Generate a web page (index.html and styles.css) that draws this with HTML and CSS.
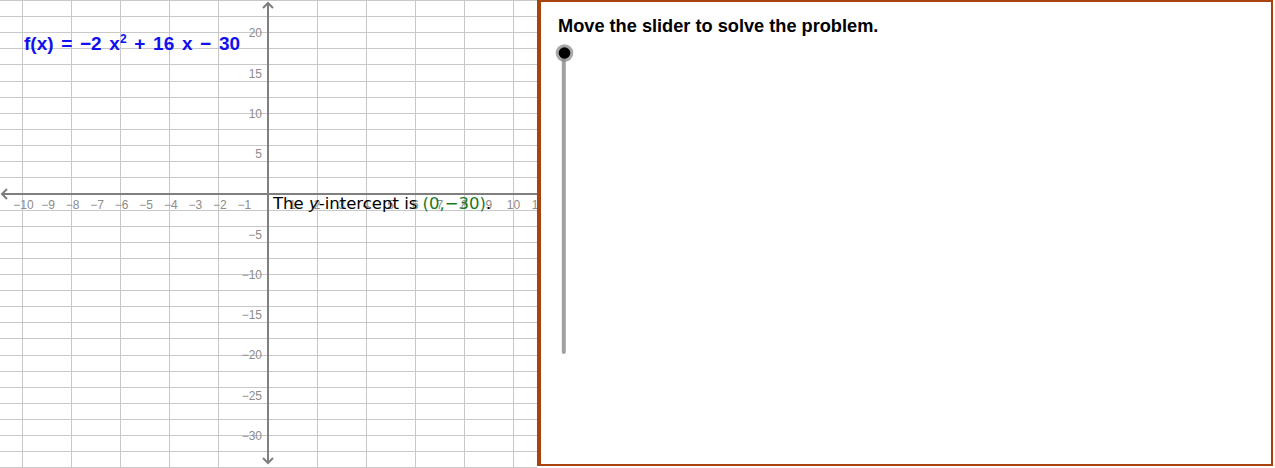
FILE: index.html
```html
<!DOCTYPE html>
<html>
<head>
<meta charset="utf-8">
<link rel="stylesheet" href="styles.css">
</head>
<body>
<div class="app">
  <div class="graphics">
    <svg class="grid" width="537" height="468" viewBox="0 0 537 468">
      <g class="gridlines">
        <line x1="22.5" y1="0" x2="22.5" y2="468"/>
        <line x1="71.5" y1="0" x2="71.5" y2="468"/>
        <line x1="120.5" y1="0" x2="120.5" y2="468"/>
        <line x1="169.5" y1="0" x2="169.5" y2="468"/>
        <line x1="218.5" y1="0" x2="218.5" y2="468"/>
        <line x1="317.5" y1="0" x2="317.5" y2="468"/>
        <line x1="366.5" y1="0" x2="366.5" y2="468"/>
        <line x1="415.5" y1="0" x2="415.5" y2="468"/>
        <line x1="464.5" y1="0" x2="464.5" y2="468"/>
        <line x1="513.5" y1="0" x2="513.5" y2="468"/>
        <line x1="0" y1="0.5" x2="537" y2="0.5"/>
        <line x1="0" y1="16.5" x2="537" y2="16.5"/>
        <line x1="0" y1="32.5" x2="537" y2="32.5"/>
        <line x1="0" y1="48.5" x2="537" y2="48.5"/>
        <line x1="0" y1="64.5" x2="537" y2="64.5"/>
        <line x1="0" y1="81.5" x2="537" y2="81.5"/>
        <line x1="0" y1="97.5" x2="537" y2="97.5"/>
        <line x1="0" y1="113.5" x2="537" y2="113.5"/>
        <line x1="0" y1="129.5" x2="537" y2="129.5"/>
        <line x1="0" y1="145.5" x2="537" y2="145.5"/>
        <line x1="0" y1="161.5" x2="537" y2="161.5"/>
        <line x1="0" y1="177.5" x2="537" y2="177.5"/>
        <line x1="0" y1="210.5" x2="537" y2="210.5"/>
        <line x1="0" y1="226.5" x2="537" y2="226.5"/>
        <line x1="0" y1="242.5" x2="537" y2="242.5"/>
        <line x1="0" y1="258.5" x2="537" y2="258.5"/>
        <line x1="0" y1="274.5" x2="537" y2="274.5"/>
        <line x1="0" y1="290.5" x2="537" y2="290.5"/>
        <line x1="0" y1="306.5" x2="537" y2="306.5"/>
        <line x1="0" y1="322.5" x2="537" y2="322.5"/>
        <line x1="0" y1="338.5" x2="537" y2="338.5"/>
        <line x1="0" y1="355.5" x2="537" y2="355.5"/>
        <line x1="0" y1="371.5" x2="537" y2="371.5"/>
        <line x1="0" y1="387.5" x2="537" y2="387.5"/>
        <line x1="0" y1="403.5" x2="537" y2="403.5"/>
        <line x1="0" y1="419.5" x2="537" y2="419.5"/>
        <line x1="0" y1="435.5" x2="537" y2="435.5"/>
        <line x1="0" y1="451.5" x2="537" y2="451.5"/>
        <line x1="0" y1="467.5" x2="537" y2="467.5"/>
      </g>
      <g class="axes">
        <line x1="268" y1="3" x2="268" y2="463"/>
        <line x1="2" y1="194" x2="537" y2="194"/>
        <polyline points="263,8 268,3 273,8"/>
        <polyline points="263,458 268,463 273,458"/>
        <polyline points="7,189 2,194 7,199"/>
      </g>
      <g class="xlabels">
        <text x="23.5" y="209">−10</text>
        <text x="48" y="209">−9</text>
        <text x="72.6" y="209">−8</text>
        <text x="97.2" y="209">−7</text>
        <text x="121.7" y="209">−6</text>
        <text x="146.2" y="209">−5</text>
        <text x="170.8" y="209">−4</text>
        <text x="195.4" y="209">−3</text>
        <text x="219.9" y="209">−2</text>
        <text x="244.4" y="209">−1</text>
        <text x="292.5" y="209">1</text>
        <text x="317.1" y="209">2</text>
        <text x="341.6" y="209">3</text>
        <text x="366.2" y="209">4</text>
        <text x="390.7" y="209">5</text>
        <text x="415.3" y="209">6</text>
        <text x="439.8" y="209">7</text>
        <text x="464.4" y="209">8</text>
        <text x="488.9" y="209">9</text>
        <text x="513.5" y="209">10</text>
        <text x="538" y="209">11</text>
      </g>
      <g class="ylabels">
        <text x="262" y="37">20</text>
        <text x="262" y="77.5">15</text>
        <text x="262" y="117.5">10</text>
        <text x="262" y="158">5</text>
        <text x="262" y="238.5">−5</text>
        <text x="262" y="278.5">−10</text>
        <text x="262" y="319">−15</text>
        <text x="262" y="359">−20</text>
        <text x="262" y="399.5">−25</text>
        <text x="262" y="439.5">−30</text>
      </g>
    </svg>
    <div class="formula">f(x) = −2 x<sup>2</sup> + 16 x − 30</div>
    <div class="intercept">The <i>y</i>-intercept is <span class="point">(0,−30)</span>.</div>
  </div>
  <div class="panel">
    <h1 class="title">Move the slider to solve the problem.</h1>
    <svg class="slider" width="34" height="320" viewBox="0 0 34 320">
      <line class="track" x1="15.8" y1="11" x2="15.8" y2="310"/>
      <circle class="halo" cx="16.5" cy="11" r="8.8"/>
      <circle class="knob" cx="16.5" cy="11" r="5.8"/>
    </svg>
  </div>
</div>
</body>
</html>
```

FILE: styles.css
```css
html, body {
  margin: 0;
  padding: 0;
  background: #ffffff;
}

.app {
  display: flex;
  width: 1275px;
  height: 468px;
  overflow: hidden;
}

.graphics {
  position: relative;
  width: 537px;
  height: 468px;
  flex: 0 0 537px;
  overflow: hidden;
}

.grid {
  display: block;
}

.gridlines line {
  stroke: #c8c8c8;
  stroke-width: 1;
  shape-rendering: crispEdges;
}

.axes line,
.axes polyline {
  stroke: #7f7f7f;
  stroke-width: 2;
  fill: none;
}

.xlabels text,
.ylabels text {
  font-family: "Liberation Sans", Arial, sans-serif;
  font-size: 12px;
  fill: #8c8c8c;
}

.xlabels text {
  text-anchor: middle;
}

.ylabels text {
  text-anchor: end;
}

.formula {
  position: absolute;
  left: 24px;
  top: 32px;
  font-family: "Liberation Sans", Arial, sans-serif;
  font-weight: bold;
  font-size: 19px;
  line-height: 24px;
  word-spacing: 2.4px;
  color: #1010f0;
  white-space: nowrap;
}

.formula sup {
  font-size: 12px;
  line-height: 0;
  vertical-align: 0.6em;
}

.intercept {
  position: absolute;
  left: 273px;
  top: 194px;
  font-family: "DejaVu Sans", "Liberation Sans", sans-serif;
  font-size: 16.5px;
  line-height: 20px;
  color: #000000;
  white-space: nowrap;
}

.point {
  color: #1b7a1b;
}

.panel {
  flex: 0 0 auto;
  width: 730px;
  height: 462px;
  border-style: solid;
  border-color: #a8420f;
  border-width: 2px 2px 2px 4px;
  background: #ffffff;
  padding: 0;
}

.title {
  margin: 14px 0 0 17px;
  font-family: "Liberation Sans", Arial, sans-serif;
  font-weight: bold;
  font-size: 18.2px;
  line-height: 20px;
  color: #000000;
}

.slider {
  display: block;
  margin: 6px 0 0 7px;
  overflow: visible;
}

.track {
  stroke: #a0a0a0;
  stroke-width: 4;
  stroke-linecap: round;
}

.halo {
  fill: #8a8a8a;
  fill-opacity: 0.75;
}

.knob {
  fill: #000000;
}
```
